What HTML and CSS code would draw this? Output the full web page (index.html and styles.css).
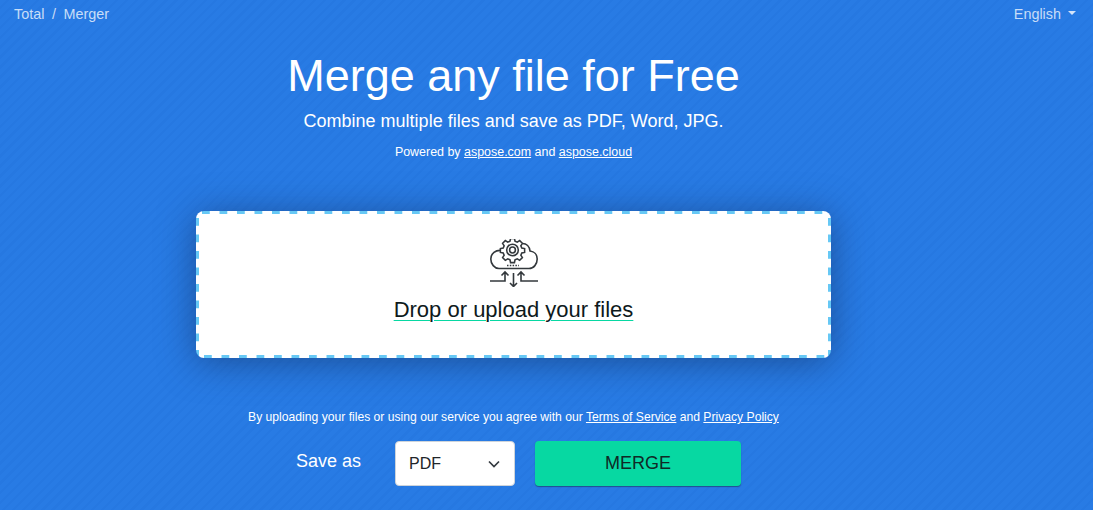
FILE: index.html
```html
<!DOCTYPE html>
<html lang="en">
<head>
    <meta charset="UTF-8">
    <meta name="viewport" content="width=device-width, initial-scale=1.0">
    <title>Merge any file for Free</title>
    <link rel="stylesheet" href="styles.css">
</head>
<body>
    <header class="topbar">
        <nav class="crumbs">
            <a href="#">Total</a>
            <span class="crumb-sep">/</span>
            <a href="#">Merger</a>
        </nav>
        <a href="#" class="lang">English<span class="caret"></span></a>
    </header>

    <main class="content">
        <h1 class="title">Merge any file for Free</h1>
        <p class="subtitle">Combine multiple files and save as PDF, Word, JPG.</p>
        <p class="powered">Powered by <a href="#">aspose.com</a> and <a href="#">aspose.cloud</a></p>

        <div class="dropzone">
            <svg class="cloud-icon" width="48" height="48" viewBox="0 0 48 48" fill="none" stroke="#33383c" stroke-width="1.6">
                <path d="M12 11.500C5.500 10.500.8 14.500.8 20c0 5 3.700 9.500 8.200 9.500h30c4.800 0 8.200-4.500 8.200-9.500 0-4.500-3-7.500-7.200-8C39.500 7.500 36.500 4.500 32.500 4.500"/>
                <g transform="translate(22.500 11) scale(.97) translate(-24 -13.500)">
                    <path d="M22 1.500h4l.6 2.900 2.300 1 2.500-1.600 2.800 2.800-1.600 2.500 1 2.300 2.900.6v4l-2.900.6-1 2.300 1.600 2.500-2.800 2.800-2.500-1.600-2.300 1-.6 2.900h-4l-.6-2.900-2.300-1-2.500 1.600-2.800-2.800 1.600-2.500-1-2.300-2.900-.6v-4l2.900-.6 1-2.300-1.600-2.500 2.800-2.800 2.500 1.600 2.300-1z" fill="#fff"/>
                    <circle cx="24" cy="13.500" r="6"/>
                    <circle cx="24" cy="13.500" r="3"/>
                </g>
                <path d="M17 26.500h12" stroke-dasharray="1.500 1.300"/>
                <path d="M0 42h15v-9M11.500 36.500l3.500-3.500 3.500 3.500"/>
                <path d="M48 42H31v-9M27.500 36.500l3.500-3.500 3.500 3.500"/>
                <path d="M23.500 34v13.500M20 44l3.500 3.500 3.500-3.500"/>
            </svg>
            <a href="#" class="drop-link">Drop or upload your files</a>
        </div>

        <p class="terms">By uploading your files or using our service you agree with our <a href="#">Terms of Service</a> and <a href="#">Privacy Policy</a></p>

        <div class="actions">
            <label class="save-label">Save as</label>
            <div class="select">
                <span>PDF</span>
                <svg width="12" height="8" viewBox="0 0 12 8" fill="none" stroke="#343a40" stroke-width="1.7"><path d="M1 1.500l5 5 5-5"/></svg>
            </div>
            <button class="merge-btn">MERGE</button>
        </div>
    </main>
</body>
</html>
```

FILE: styles.css
```css
* {
    box-sizing: border-box;
    margin: 0;
    padding: 0;
}

body {
    font-family: "Liberation Sans", Arial, sans-serif;
    color: #fff;
    height: 510px;
    overflow: hidden;
    background-color: #277ae3;
    background-image: repeating-linear-gradient(135deg, #287be4 0, #287be4 4.500px, #2678e1 4.500px, #2678e1 7px);
}

a {
    color: inherit;
}

.topbar {
    display: flex;
    justify-content: space-between;
    align-items: center;
    height: 28px;
    padding: 0 17px 0 14px;
    font-size: 14.4px;
    color: rgba(255, 255, 255, 0.75);
}

.topbar a {
    text-decoration: none;
}

.crumb-sep {
    margin: 0 3.500px;
}

.lang {
    display: flex;
    align-items: center;
}

.caret {
    margin-left: 7px;
    margin-top: -2px;
    border-top: 4px solid rgba(255, 255, 255, 0.8);
    border-left: 4px solid transparent;
    border-right: 4px solid transparent;
}

.content {
    width: 1027px;
    display: flex;
    flex-direction: column;
    align-items: center;
}

.title {
    font-size: 45px;
    font-weight: 400;
    line-height: 52px;
    margin-top: 22px;
}

.subtitle {
    font-size: 18px;
    line-height: 24px;
    margin-top: 7px;
}

.powered {
    font-size: 12.45px;
    line-height: 16px;
    margin-top: 11px;
}

/* dashes drawn as backgrounds, a dashed border can't be given this dash length */
.dropzone {
    width: 635px;
    height: 147px;
    margin-top: 51px;
    background-color: #fff;
    background-image:
        linear-gradient(90deg, #66c8f5 8px, transparent 8px),
        linear-gradient(90deg, #66c8f5 8px, transparent 8px),
        linear-gradient(#66c8f5 8px, transparent 8px),
        linear-gradient(#66c8f5 8px, transparent 8px);
    background-size: 17.5px 3px, 17.5px 3px, 3px 16.5px, 3px 16.5px;
    background-position: 6px 0, 8px 100%, 0 7px, 100% 7px;
    background-repeat: repeat-x, repeat-x, repeat-y, repeat-y;
    border-radius: 8px;
    box-shadow: 0 4px 36px rgba(20, 50, 100, 0.6);
    display: flex;
    flex-direction: column;
    align-items: center;
}

.cloud-icon {
    margin-top: 28px;
}

.drop-link {
    font-size: 22px;
    line-height: 26px;
    margin-top: 10px;
    color: #0e1a1c;
    text-decoration-color: #07d8a2;
    text-decoration-thickness: 1px;
    text-underline-offset: 3px;
}

.terms {
    font-size: 12.15px;
    line-height: 16px;
    margin-top: 51px;
}

.actions {
    display: flex;
    align-items: center;
    margin-top: 16px;
    padding-left: 10px;
}

.save-label {
    font-size: 18px;
    width: 99px;
    padding-bottom: 4px;
}

.select {
    width: 120px;
    height: 45px;
    background: #fff;
    border: 1px solid #ced4da;
    border-radius: 4px;
    display: flex;
    align-items: center;
    justify-content: space-between;
    padding: 0 14px 0 13px;
    font-size: 16px;
    color: #212529;
}

.merge-btn {
    width: 206px;
    height: 45px;
    margin-left: 20px;
    background: #07d8a2;
    border: none;
    border-radius: 4px;
    box-shadow: 0 1px 1px rgba(30, 50, 90, 0.6);
    font-family: inherit;
    font-size: 18px;
    color: #0f2a26;
}
```
